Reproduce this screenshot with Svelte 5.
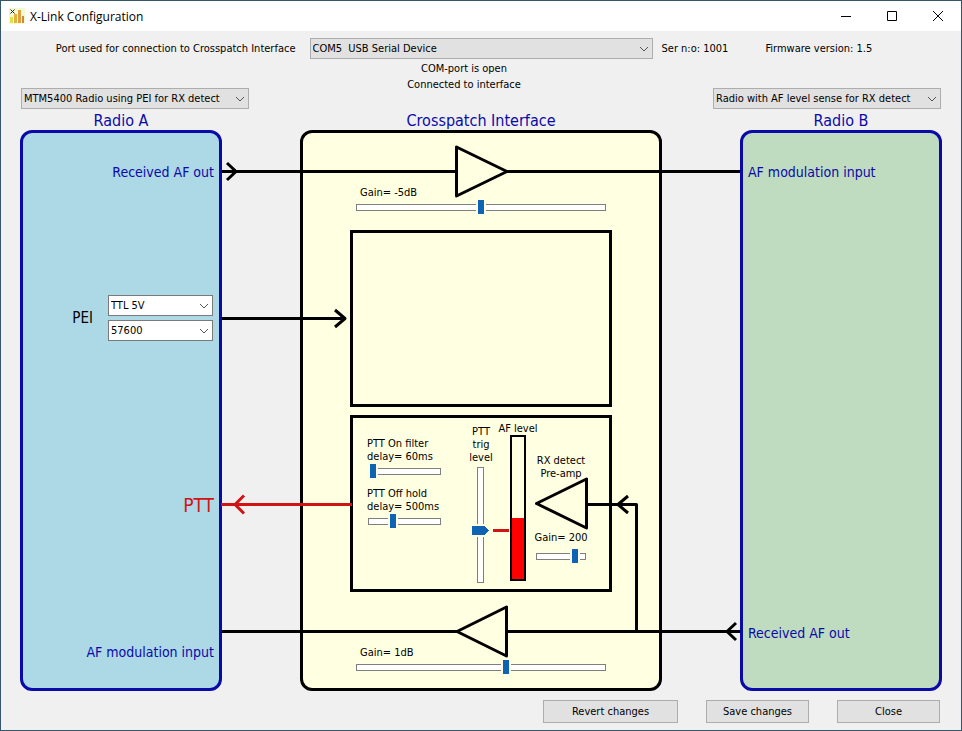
<script>
  let port = 'COM5  USB Serial Device';
  let radioA = 'MTM5400 Radio using PEI for RX detect';
  let radioB = 'Radio with AF level sense for RX detect';
  let peiLevel = 'TTL 5V';
  let peiBaud = '57600';

  let gainAB = -5;
  let gainBA = 1;
  let pttOn = 60;
  let pttOff = 500;
  let trigLevel = 45;
  let afLevel = 43;
  let preamp = 200;

  // vertical position of the red mark beside the AF bar
  $: markY = 446.5 - Math.round((trigLevel / 100) * 103);
</script>

<div class="window">
  <header class="titlebar">
    <svg class="logo" width="16" height="16" viewBox="0 0 16 16" aria-hidden="true">
      <rect width="16" height="16" fill="#f1fad2" />
      <rect x="1" y="9" width="3" height="6" fill="#dfe04a" />
      <rect x="5" y="6" width="3" height="9" fill="#e3b23c" />
      <rect x="9" y="2" width="3" height="13" fill="#e0a040" />
      <rect x="13" y="8" width="2" height="7" fill="#c98a3c" />
      <path d="M1.500 1.500l4 4M5.500 1.500l-4 4" stroke="#222" stroke-width="1" />
    </svg>
    <h1>X-Link Configuration</h1>
    <div class="caption-buttons">
      <button aria-label="Minimize">
        <svg width="10" height="10"><path d="M0 5.5h10" /></svg>
      </button>
      <button aria-label="Maximize">
        <svg width="10" height="10"><path d="M.5 .5h9v9h-9z" /></svg>
      </button>
      <button aria-label="Close window">
        <svg width="10" height="10"><path d="M0 0l10 10M10 0L0 10" /></svg>
      </button>
    </div>
  </header>

  <div class="port-row">
    <label for="port">Port used for connection to Crosspatch Interface</label>
    <div class="combo">
      <select id="port" bind:value={port}>
        <option value="COM5  USB Serial Device">COM5&nbsp; USB Serial Device</option>
      </select>
      <svg class="chevron" width="10" height="6"><path d="M1 1l4 4 4-4" /></svg>
    </div>
    <div class="versions">
      <span>Ser n:o: 1001</span>
      <span>Firmware version: 1.5</span>
    </div>
  </div>

  <div class="radio-row">
    <div class="combo">
      <select aria-label="Radio A type" bind:value={radioA}>
        <option>MTM5400 Radio using PEI for RX detect</option>
      </select>
      <svg class="chevron" width="10" height="6"><path d="M1 1l4 4 4-4" /></svg>
    </div>
    <div class="status">
      <div>COM-port is open</div>
      <div>Connected to interface</div>
    </div>
    <div class="combo">
      <select aria-label="Radio B type" bind:value={radioB}>
        <option>Radio with AF level sense for RX detect</option>
      </select>
      <svg class="chevron" width="10" height="6"><path d="M1 1l4 4 4-4" /></svg>
    </div>
  </div>

  <main class="diagram">
    <h2 class="title-a">Radio A</h2>
    <h2 class="title-x">Crosspatch Interface</h2>
    <h2 class="title-b">Radio B</h2>

    <section class="radio radio-a">
      <div class="port-name">Received AF out</div>
      <div class="pei">
        <span>PEI</span>
        <div class="pei-selects">
          <div class="combo white">
            <select aria-label="PEI level" bind:value={peiLevel}>
              <option>TTL 5V</option>
            </select>
            <svg class="chevron" width="10" height="6"><path d="M1 1l4 4 4-4" /></svg>
          </div>
          <div class="combo white">
            <select aria-label="PEI baud rate" bind:value={peiBaud}>
              <option>57600</option>
            </select>
            <svg class="chevron" width="10" height="6"><path d="M1 1l4 4 4-4" /></svg>
          </div>
        </div>
      </div>
      <div class="port-name ptt">PTT</div>
      <div class="port-name mod-in">AF modulation input</div>
    </section>

    <svg class="gap" aria-hidden="true">
      <line x1="0" y1="41.5" x2="100%" y2="41.5" />
      <path d="M5 33l9 8.500-9 8.500" />
      <line x1="0" y1="188.500" x2="100%" y2="188.500" />
      <line class="red" x1="-1" y1="374.500" x2="100%" y2="374.500" />
      <path class="red" d="M22 365.500l-9 9 9 9" />
      <line x1="0" y1="501.500" x2="100%" y2="501.500" />
    </svg>

    <section class="interface">
      <svg class="wires" width="362" height="561" aria-hidden="true">
        <path d="M0 41.500H156.500M207 41.500H362" />
        <path d="M156.500 17v49l50.500-24.500z" />
        <path d="M0 188.500H46M35 180l10 8.500-10 8.500" />
        <path d="M0 501.500H157M207 501.500H362M336.500 501.500V374.500H287" />
        <path d="M206.500 477v49l-49.500-24.500z" />
        <path d="M328 366l-10 8.500 10 8.500" />
        <path d="M286.500 349v49l-50-24.500z" />
        <path class="red" d="M0 374.500H52" />
        <path class="red" d="M193 {markY}H209" />
      </svg>

      <div class="gain">
        <label for="gain-ab">Gain= {gainAB}dB</label>
        <input id="gain-ab" type="range" min="-34" max="24" bind:value={gainAB} />
      </div>

      <div class="box"></div>

      <div class="box detector">
        <div class="delays">
          <label for="ptt-on">PTT On filter<br />delay= {pttOn}ms</label>
          <input id="ptt-on" type="range" min="60" max="1600" bind:value={pttOn} />
          <label for="ptt-off">PTT Off hold<br />delay= {pttOff}ms</label>
          <input id="ptt-off" type="range" min="0" max="1600" bind:value={pttOff} />
        </div>
        <div class="trig">
          <label for="trig">PTT<br />trig<br />level</label>
          <input id="trig" class="vertical" type="range" min="0" max="100" bind:value={trigLevel} />
        </div>
        <div class="af">
          <span id="af-label">AF level</span>
          <div class="bar" role="meter" aria-labelledby="af-label" aria-valuenow={afLevel}>
            <div class="fill" style="height: {afLevel}%"></div>
          </div>
        </div>
        <div class="preamp">
          <div class="preamp-name">RX detect<br />Pre-amp</div>
          <label for="preamp">Gain= {preamp}</label>
          <input id="preamp" type="range" min="0" max="235" bind:value={preamp} />
        </div>
      </div>

      <div class="gain gain-bottom">
        <label for="gain-ba">Gain= {gainBA}dB</label>
        <input id="gain-ba" type="range" min="-34" max="24" bind:value={gainBA} />
      </div>
    </section>

    <svg class="gap" aria-hidden="true">
      <line x1="0" y1="41.5" x2="100%" y2="41.5" />
      <line x1="0" y1="501.5" x2="100%" y2="501.5" />
      <svg x="100%" overflow="visible"><path d="M-4 493l-9 8.500 9 8.500" /></svg>
    </svg>

    <section class="radio radio-b">
      <div class="port-name">AF modulation input</div>
      <div class="port-name rx-out">Received AF out</div>
    </section>
  </main>

  <footer>
    <button class="wide">Revert changes</button>
    <button>Save changes</button>
    <button>Close</button>
  </footer>
</div>

<style>
  :global(body) {
    margin: 0;
  }
  .window {
    box-sizing: border-box;
    min-height: 100vh;
    min-width: 920px;
    border: 1px solid #34566b;
    background: #f0f0f0;
    color: #000;
    font-family: Tahoma, "DejaVu Sans Condensed", "DejaVu Sans", sans-serif;
    font-size: 11px;
    line-height: 13px;
  }
  .titlebar {
    display: flex;
    align-items: center;
    height: 30px;
    padding-left: 8px;
    background: #fff;
  }
  h1 {
    flex: 1;
    margin: 0 0 0 5px;
    font-family: "Segoe UI", "Open Sans", sans-serif;
    font-size: 12px;
    font-weight: 400;
  }
  .caption-buttons {
    display: flex;
  }
  .caption-buttons button {
    display: flex;
    align-items: center;
    justify-content: center;
    width: 46px;
    height: 30px;
    padding: 0;
    border: none;
    background: none;
  }
  .caption-buttons path {
    fill: none;
    stroke: #000;
  }
  .port-row {
    display: grid;
    grid-template-columns: 1fr 343px 1fr;
    align-items: center;
    padding-top: 7px;
  }
  .port-row label {
    padding-right: 14px;
    text-align: right;
  }
  .versions {
    display: flex;
    gap: 37px;
    padding-left: 9px;
  }
  .radio-row {
    display: grid;
    grid-template-columns: 228px 1fr 228px;
    align-items: end;
    box-sizing: border-box;
    padding: 2px 20px 0;
    height: 50px;
  }
  .status {
    align-self: start;
    padding-right: 34px;
    line-height: 16px;
    text-align: center;
  }
  .combo {
    position: relative;
  }
  select {
    display: block;
    appearance: none;
    box-sizing: border-box;
    width: 100%;
    height: 21px;
    padding: 0 18px 0 2px;
    border: 1px solid #adadad;
    border-radius: 0;
    background: #e1e1e1;
    color: #000;
    font: inherit;
  }
  .white select {
    border-color: #7a7a7a;
    background: #fff;
  }
  .chevron {
    position: absolute;
    right: 4px;
    top: 8px;
    fill: none;
    stroke: #555;
    pointer-events: none;
  }
  .diagram {
    display: grid;
    grid-template-columns: 202px 1fr 362px 1fr 202px;
    grid-template-rows: 21px 561px;
    padding: 0 19px;
  }
  h2 {
    margin: 0;
    color: #0a0aa8;
    font-size: 16px;
    font-weight: 400;
    line-height: 24px;
    text-align: center;
  }
  .title-a {
    grid-column: 1;
  }
  .title-x {
    grid-column: 3;
  }
  .title-b {
    grid-column: 5;
  }
  .radio,
  .interface {
    box-sizing: border-box;
    border: 3px solid #0a0aa8;
    border-radius: 12px;
  }
  .radio {
    display: grid;
    align-items: center;
    padding: 0 5px;
  }
  .radio-a {
    grid-template-rows: 78px 214px 160px 103px;
    background: #add8e6;
    text-align: right;
  }
  .radio-b {
    grid-template-rows: 78px 374px 103px;
    background: #bfdcc0;
  }
  .port-name {
    color: #0a0aa8;
    font-size: 14px;
    line-height: 20px;
  }
  .ptt {
    color: #d01414;
    font-size: 19px;
  }
  .mod-in {
    padding-top: 30px;
  }
  .rx-out {
    grid-row: 3;
    padding-bottom: 8px;
  }
  .pei {
    display: flex;
    align-items: center;
    justify-content: flex-end;
    gap: 15px;
    padding-right: 1px;
    font-size: 15px;
    line-height: 20px;
  }
  .pei-selects {
    display: grid;
    gap: 4px;
    width: 105px;
    font-size: 11px;
  }
  .gap {
    width: 100%;
    height: 561px;
    overflow: visible;
  }
  .gap line,
  .gap path,
  .wires path {
    fill: none;
    stroke: #000;
    stroke-width: 3;
    stroke-linejoin: round;
  }
  .gap .red,
  .wires .red {
    stroke: #d01414;
  }
  .interface {
    position: relative;
    display: grid;
    grid-template-rows: 89px 177px 177px 1fr;
    row-gap: 8px;
    padding: 0 47px;
    border-color: #000;
    background: #ffffe1;
  }
  .wires {
    position: absolute;
    top: -3px;
    left: -3px;
    z-index: 1;
    pointer-events: none;
  }
  .gain {
    padding: 53px 6px 0;
  }
  .gain-bottom {
    padding-top: 46px;
  }
  .gain label {
    display: block;
    padding: 0 0 1px 4px;
  }
  .box {
    box-sizing: border-box;
    border: 3px solid #000;
  }
  .detector {
    display: grid;
    grid-template-columns: 97px 34px 40px 46px;
    padding-left: 14px;
    white-space: nowrap;
  }
  .delays {
    padding-top: 19px;
  }
  .delays label {
    display: block;
  }
  .trig,
  .af,
  .preamp {
    display: grid;
    justify-content: center;
    justify-items: center;
    align-content: start;
    text-align: center;
  }
  .trig {
    row-gap: 3px;
    padding-top: 7px;
  }
  .af {
    padding-top: 4px;
  }
  .bar {
    display: flex;
    align-items: flex-end;
    box-sizing: border-box;
    width: 16px;
    height: 146px;
    border: 2px solid #000;
  }
  .fill {
    width: 100%;
    background: #f00;
  }
  .preamp {
    padding-top: 36px;
  }
  .preamp-name {
    margin-bottom: 51px;
  }
  input[type="range"] {
    display: block;
    appearance: none;
    width: 100%;
    height: 14px;
    margin: 0;
    background: none;
  }
  .delays input[type="range"] {
    width: 73px;
    margin: 1px 0 9px 1px;
  }
  .preamp input[type="range"] {
    width: 50px;
    margin-top: 5px;
  }
  input[type="range"]::-webkit-slider-runnable-track {
    box-sizing: border-box;
    height: 14px;
    background: linear-gradient(#fff, #fff) 1px 5px / calc(100% - 2px) 5px no-repeat,
      linear-gradient(#7f7f7f, #7f7f7f) 0 4px / 100% 7px no-repeat;
  }
  input[type="range"]::-webkit-slider-thumb {
    appearance: none;
    box-sizing: border-box;
    width: 10px;
    height: 14px;
    border: solid #ffffe1;
    border-width: 0 2px;
    background: #0f63b3;
  }
  input[type="range"].vertical {
    writing-mode: vertical-lr;
    direction: rtl;
    width: 17px;
    height: 116px;
  }
  input[type="range"].vertical::-webkit-slider-runnable-track {
    width: 17px;
    height: 116px;
    background: linear-gradient(#fff, #fff) 6px 1px / 5px calc(100% - 2px) no-repeat,
      linear-gradient(#7f7f7f, #7f7f7f) 5px 0 / 7px 100% no-repeat;
  }
  input[type="range"].vertical::-webkit-slider-thumb {
    width: 17px;
    height: 13px;
    border: none;
    background: linear-gradient(#0f63b3, #0f63b3) 0 2px / 12px 9px no-repeat,
      conic-gradient(from 225deg at 100% 50%, #0f63b3 90deg, #ffffe1 0) 12px 2px / 5px 9px no-repeat,
      #ffffe1;
  }
  footer {
    display: flex;
    justify-content: flex-end;
    gap: 28px;
    padding: 9px 21px 7px;
  }
  footer button {
    width: 103px;
    height: 23px;
    padding: 0;
    border: 1px solid #adadad;
    background: #e1e1e1;
    color: #000;
    font: inherit;
  }
  footer .wide {
    width: 135px;
  }
</style>
